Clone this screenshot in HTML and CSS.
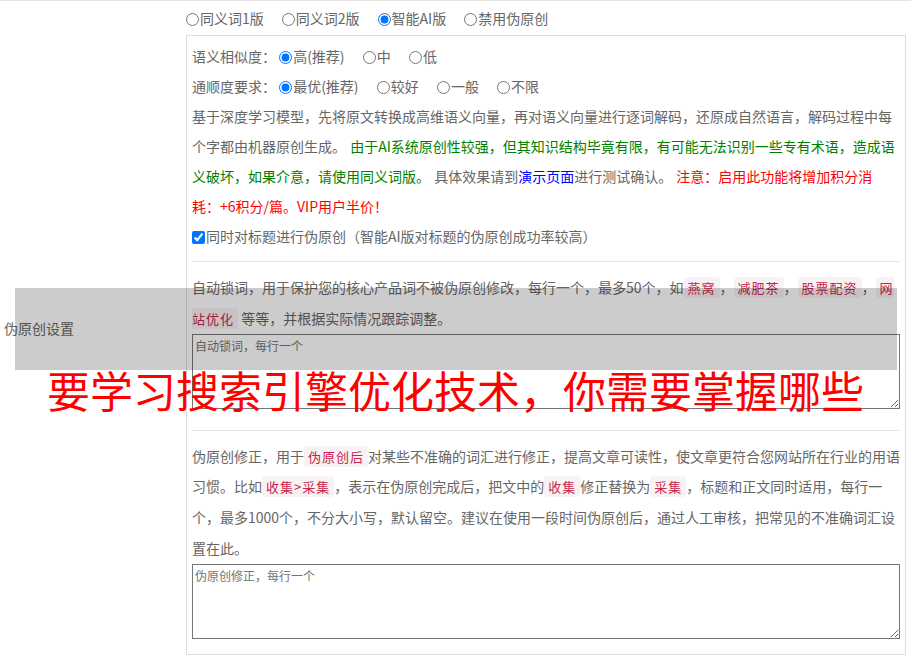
FILE: index.html
```html
<!DOCTYPE html>
<html>
<head>
<meta charset="utf-8" />
<title>伪原创设置</title>
<link rel="stylesheet" href="styles.css">
</head>

<body>
<!-- Ligne de réglage -->
<div class="form_row">
    <div class="row_label">伪原创设置</div>
    <div class="row_body">
        <div class="modes">
            <label class="opt"><input type="radio" name="mode">同义词1版</label>
            <label class="opt"><input type="radio" name="mode">同义词2版</label>
            <label class="opt"><input type="radio" name="mode" checked>智能AI版</label>
            <label class="opt"><input type="radio" name="mode">禁用伪原创</label>
        </div>

        <div class="ai_box">
            <div class="line">
                <span class="line_name">语义相似度：</span>
                <label class="opt"><input type="radio" name="sim" checked>高(推荐)</label>
                <label class="opt"><input type="radio" name="sim">中</label>
                <label class="opt"><input type="radio" name="sim">低</label>
            </div>
            <div class="line">
                <span class="line_name">通顺度要求：</span>
                <label class="opt"><input type="radio" name="flu" checked>最优(推荐)</label>
                <label class="opt"><input type="radio" name="flu">较好</label>
                <label class="opt"><input type="radio" name="flu">一般</label>
                <label class="opt"><input type="radio" name="flu">不限</label>
            </div>
            <p class="desc">基于深度学习模型，先将原文转换成高维语义向量，再对语义向量进行逐词解码，还原成自然语言，解码过程中每个字都由机器原创生成。 <span class="green">由于AI系统原创性较强，但其知识结构毕竟有限，有可能无法识别一些专有术语，造成语义破坏，如果介意，请使用同义词版。</span> 具体效果请到<a class="blue">演示页面</a>进行测试确认。 <span class="red">注意：启用此功能将增加积分消耗：+6积分/篇。VIP用户半价！</span></p>
            <div class="line">
                <label><input type="checkbox" checked>同时对标题进行伪原创（智能AI版对标题的伪原创成功率较高）</label>
            </div>

            <hr>
            <p class="tip">自动锁词，用于保护您的核心产品词不被伪原创修改，每行一个，最多50个，如<code>燕窝</code>，<code>减肥茶</code>，<code>股票配资</code>，<code>网站优化</code> 等等，并根据实际情况跟踪调整。</p>
            <textarea placeholder="自动锁词，每行一个"></textarea>

            <hr>
            <p class="tip">伪原创修正，用于<code>伪原创后</code>对某些不准确的词汇进行修正，提高文章可读性，使文章更符合您网站所在行业的用语习惯。比如<code>收集&gt;采集</code>，表示在伪原创完成后，把文中的<code>收集</code>修正替换为<code>采集</code>，标题和正文同时适用，每行一个，最多1000个，不分大小写，默认留空。建议在使用一段时间伪原创后，通过人工审核，把常见的不准确词汇设置在此。</p>
            <textarea placeholder="伪原创修正，每行一个"></textarea>
        </div>
    </div>
</div>

<!-- Bandeau par-dessus -->
<div class="pub">
    <div class="pub_band"></div>
    <div class="pub_title">要学习搜索引擎优化技术，你需要掌握哪些</div>
</div>
</body>
</html>
```

FILE: styles.css
```css
body {
    margin: 0;
    padding: 0;
    font-family: "Noto Sans CJK SC", "Microsoft YaHei", sans-serif;
    font-size: 14px;
    color: #666;
    border-top: 1px solid #e3e3e3;
    position: relative;
    text-spacing-trim: space-all;
}

.form_row {
    display: flex;
    align-items: center;
}

.row_label {
    width: 182px;
    padding-left: 4px;
}

.row_body {
    width: 720px;
}

.modes {
    height: 34px;
    display: flex;
    align-items: center;
}

.opt {
    margin-right: 18px;
}

.line .opt {
    margin-right: 15px;
}

input[type=radio],
input[type=checkbox] {
    margin: 0 1px 0 0;
    vertical-align: -2px;
}

.ai_box {
    border: 1px solid #ddd;
    padding: 5px;
}

.line {
    line-height: 30px;
    height: 30px;
}

.desc {
    margin: 0;
    line-height: 30px;
    word-spacing: 1px;
}

.green { color: #008000; }
.blue {  color: #0000ff; }
.red {   color: #ff0000; }

hr {
    border: 0;
    border-top: 1px solid #e5e5e5;
    margin: 10px 0;
}

.tip {
    margin: 0;
    line-height: 30.8px;
}

code {
    font-family: "Noto Sans CJK SC", sans-serif;
    font-size: 13px;
    line-height: 1;
    letter-spacing: 1px;
    padding: 1px 4px;
    color: #c7254e;
    background: #f9f2f4;
    border-radius: 4px;
}

textarea {
    display: block;
    box-sizing: border-box;
    width: 100%;
    height: 75px;
    margin: 0 0 21px;
    font-family: "Noto Sans CJK SC", sans-serif;
    font-size: 12px;
    border: 1px solid #767676;
}

textarea:last-child {
    margin-bottom: 10px;
}

.pub {
    position: absolute;
    left: 0;
    right: 0;
    top: 287px;
}

.pub_band {
    height: 82px;
    margin: 0 14px 0 15px;
    background: rgba(0, 0, 0, 0.2);
}

.pub_title {
    margin-top: -2px;
    text-align: center;
    font-size: 43px;
    line-height: 43px;
    color: #ff0000;
}
```
